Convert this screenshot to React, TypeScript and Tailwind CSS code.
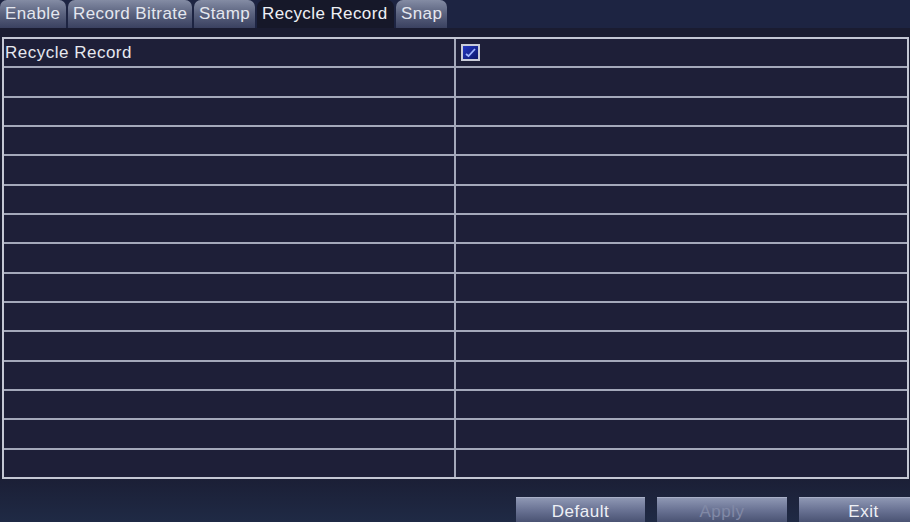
import React from 'react';

const tabs = [
    { label: 'Enable', w: 'w-[66px]' },
    { label: 'Record Bitrate', w: 'w-[124px]' },
    { label: 'Stamp', w: 'w-[61px]' },
    { label: 'Recycle Record', w: 'w-[137px]', active: true },
    { label: 'Snap', w: 'w-[51px]' },
];

const rows = Array.from({ length: 15 }, (_, i) => i);

export default function App() {
    return (
        <div className="w-[910px] h-[522px] overflow-hidden bg-[#1c2140] text-[#e6e8ef] font-['Liberation_Sans',Arial,sans-serif] flex flex-col">
            {/* tab strip */}
            <div className="h-[28px] flex gap-[2px] bg-[#1d2442]">
                {tabs.map((t) => (
                    <div
                        key={t.label}
                        className={
                            t.active
                                ? `${t.w} h-full rounded-t-[7px] bg-[#161829] flex items-center pl-[5px] text-[17px] tracking-[0.4px] text-[#eef0f5]`
                                : `${t.w} h-full rounded-t-[7px] bg-gradient-to-b from-[#848ca4] via-[#5a627e] to-[#3a4160] flex items-center pl-[5px] text-[17px] tracking-[0.4px] text-[#e4e7ef]`
                        }
                    >
                        {t.label}
                    </div>
                ))}
            </div>

            <div className="h-[9px] bg-[#1a1c31]" />

            {/* settings table */}
            <div className="bg-[#1a1c31] pl-[2px] pr-[1px]">
                <div className="h-[442px] border-2 border-[#c4c7d4] bg-[#1e1f38] flex flex-col">
                    {rows.map((i) => (
                        <div
                            key={i}
                            className={`flex-1 flex ${i < 14 ? 'border-b-2 border-[#a4a8ba]' : ''}`}
                        >
                            <div className="w-[452px] border-r-2 border-[#a4a8ba] flex items-center pl-[1px] text-[17px] tracking-[0.5px]">
                                {i === 0 ? 'Recycle Record' : ''}
                            </div>
                            <div className="flex-1 flex items-center pl-[5px]">
                                {i === 0 && (
                                    <div className="w-[19px] h-[17px] border-2 border-[#c9ccd8] bg-gradient-to-br from-[#2438c4] to-[#0c176a] flex items-center justify-center">
                                        <svg width="13" height="11" viewBox="0 0 13 11">
                                            <path d="M2 7 L4.5 9 L11 2" stroke="#9fb4ff" strokeWidth="1.8" fill="none" />
                                        </svg>
                                    </div>
                                )}
                            </div>
                        </div>
                    ))}
                </div>
            </div>

            {/* bottom button bar */}
            <div className="flex-1 bg-gradient-to-b from-[#1b1f36] to-[#1f2a45] flex items-end pl-[516px] gap-[12px]">
                <button className="w-[129px] h-[25px] shrink-0 border-t border-[#a9b0c8] bg-gradient-to-b from-[#8e97b3] via-[#6a7394] to-[#4a5373] text-[17px] tracking-[0.5px] text-[#eef0f5] pt-[1px]">
                    Default
                </button>
                <button className="w-[130px] h-[25px] shrink-0 border-t border-[#a9b0c8] bg-gradient-to-b from-[#8e97b3] via-[#6a7394] to-[#4a5373] text-[17px] tracking-[0.5px] text-[#8189a6] pt-[1px]">
                    Apply
                </button>
                <button className="w-[129px] h-[25px] shrink-0 border-t border-[#a9b0c8] bg-gradient-to-b from-[#8e97b3] via-[#6a7394] to-[#4a5373] text-[17px] tracking-[0.5px] text-[#eef0f5] pt-[1px]">
                    Exit
                </button>
            </div>
        </div>
    );
}
